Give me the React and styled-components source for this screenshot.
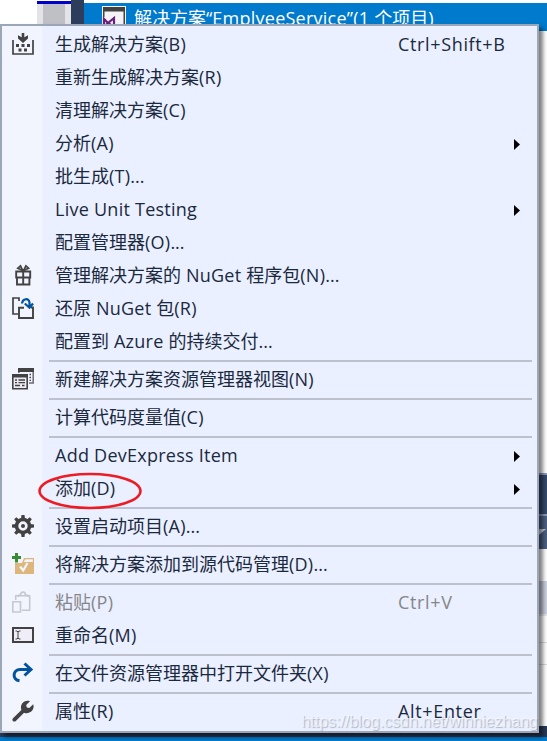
import React from "react";
import styled, { createGlobalStyle } from "styled-components";

const GlobalStyle = createGlobalStyle`
  * {
    box-sizing: border-box;
  }
  body {
    margin: 0;
    overflow: hidden;
    background-color: #fff;
    font-family: "Open Sans", "Noto Sans CJK SC", sans-serif;
    font-size: 18px;
  }
  svg {
    display: block;
  }
`;

const BuildIcon = () => (
  <svg width="22" height="22" viewBox="0 0 22 22">
    <path d="M1 7v14h20V7" fill="none" stroke="#424242" strokeWidth="1.7" />
    <path d="M9.7 0h2.6v4.2l3.700-2v3.200L11 10 6 5.400V2.200l3.700 2z" fill="#424242" />
    <path
      d="M4 11h3v3H4zM9.500 11h3v3h-3zM15 11h3v3h-3zM6.500 15.500h3v3h-3zM12 15.500h3v3h-3z"
      fill="#424242"
    />
  </svg>
);

const PackageIcon = () => (
  <svg width="22" height="22" viewBox="0 0 22 22" fill="none" stroke="#424242" strokeWidth="1.9">
    <path d="M4.200 7.500h14v6h-14zM5 13.500h12.400v7H5zM11.200 7v13.500" />
    <path d="M10.800 6.500L5.800 4.300 8.500 1.800zM11.600 6.500L16.600 4.300 13.900 1.800z" strokeWidth="1.700" />
  </svg>
);

const RestoreIcon = () => (
  <svg width="22" height="22" viewBox="0 0 22 22" fill="none" stroke="#424242">
    <path d="M6 17H1V1h6v3" strokeWidth="1.700" />
    <path d="M12 10.700H7V21h14V10.500h-2" strokeWidth="1.900" />
    <path d="M10 6.500C10.500 1.500 17 .5 17.500 5.500v4M12.800 6.500l4.700 4.200L21 6.500" stroke="#00539c" strokeWidth="2.200" />
  </svg>
);

const WindowsIcon = () => (
  <svg width="22" height="22" viewBox="0 0 22 22">
    <path d="M6.800 5V1h14.400v14H17" fill="none" stroke="#6b6b70" strokeWidth="1.500" />
    <path d="M6 0h16v4H6z" fill="#424242" />
    <path d="M.8 7h14.400v13.700H.8z" fill="#eceaf5" stroke="#424242" strokeWidth="1.600" />
    <path d="M0 6h16v3.500H0z" fill="#424242" />
    <path
      d="M3 12h2m1.500 0H13M3 14.700h2m1.500 0H13M3 17.500h5m2 0h2.500M17.500 6.500h1.500M17.500 9.500h1.500M17.500 12.300h1.500"
      stroke="#424242"
      strokeWidth="1.300"
    />
  </svg>
);

const GearIcon = () => (
  <svg width="22" height="22" viewBox="0 0 22 22">
    <circle cx="11" cy="11" r="6.500" fill="none" stroke="#424242" strokeWidth="3.600" />
    <circle cx="11" cy="11" r="2" fill="#424242" />
    {[0, 45, 90, 135, 180, 225, 270, 315].map((angle) => (
      <path key={angle} d="M9 4L9.500 0h3L13 4z" fill="#424242" transform={`rotate(${angle} 11 11)`} />
    ))}
  </svg>
);

const SourceControlIcon = () => (
  <svg width="22" height="22" viewBox="0 0 22 22">
    <path d="M3 10h7l2-5h10v16H3z" fill="#dcb67a" />
    <path d="M13.200 6.200h7.600V9h-9z" fill="#f2f3fc" />
    <path d="M8 13.500l3.200 4L15.500 10" fill="none" stroke="#f2f3fc" strokeWidth="2.300" />
    <path d="M3 0h3v3h3v3H6v3.500H3V6H0V3h3z" fill="#388a34" />
  </svg>
);

const PasteIcon = () => (
  <svg width="22" height="22" viewBox="0 0 22 22" fill="none" stroke="#c6c8d1" strokeWidth="1.600">
    <path d="M3.700 9V4.800h14v14.500H10M.8 10.800h7.700V21H.8z" />
    <path d="M6.500 6V4.300h2c0-4.400 5-4.400 5 0h2V6" />
  </svg>
);

const RenameIcon = () => (
  <svg width="22" height="22" viewBox="0 0 22 22">
    <path d="M1 4h20v14H1z" fill="#efedf7" stroke="#424242" strokeWidth="2" />
    <path d="M3.500 7h1.500l1 1 1-1h1.500M6 8v6M3.500 15h1.500l1-1 1 1h1.500" fill="none" stroke="#424242" />
  </svg>
);

const OpenFolderIcon = () => (
  <svg width="22" height="22" viewBox="0 0 22 22" fill="none" stroke="#00539c" strokeWidth="3">
    <path d="M7.500 18.800C-.5 17.500 1 7.500 8 7.500h11" />
    <path d="M12.500 1.500L19 7.500l-6.500 6" />
  </svg>
);

const WrenchIcon = () => (
  <svg width="22" height="22" viewBox="0 0 22 22">
    <path
      d="M1 18.300L9.400 10C7.500 4.700 12-.8 18 1.200L14.200 5l.6 2.500 2.500.6L21.200 4.300C23.200 10 17.500 14.800 12 12.700l-8.400 8.500C1.500 22.500-.7 20.300 1 18.300z"
      fill="#424242"
    />
  </svg>
);

const items = [
  { label: "生成解决方案(B)", keys: "Ctrl+Shift+B", icon: <BuildIcon /> },
  { label: "重新生成解决方案(R)" },
  { label: "清理解决方案(C)" },
  { label: "分析(A)", submenu: true },
  { label: "批生成(T)..." },
  { label: "Live Unit Testing", submenu: true },
  { label: "配置管理器(O)..." },
  { label: "管理解决方案的 NuGet 程序包(N)...", icon: <PackageIcon /> },
  { label: "还原 NuGet 包(R)", icon: <RestoreIcon /> },
  { label: "配置到 Azure 的持续交付..." },
  { separator: true },
  { label: "新建解决方案资源管理器视图(N)", icon: <WindowsIcon /> },
  { separator: true },
  { label: "计算代码度量值(C)" },
  { separator: true },
  { label: "Add DevExpress Item", submenu: true },
  { label: "添加(D)", submenu: true, circled: true },
  { separator: true },
  { label: "设置启动项目(A)...", icon: <GearIcon /> },
  { separator: true },
  { label: "将解决方案添加到源代码管理(D)...", icon: <SourceControlIcon /> },
  { separator: true },
  { label: "粘贴(P)", keys: "Ctrl+V", icon: <PasteIcon />, disabled: true },
  { label: "重命名(M)", icon: <RenameIcon /> },
  { separator: true },
  { label: "在文件资源管理器中打开文件夹(X)", icon: <OpenFolderIcon /> },
  { separator: true },
  { label: "属性(R)", keys: "Alt+Enter", icon: <WrenchIcon /> },
];

// Latin runs are set a little wider than the Chinese text around them
const MixedText = ({ children }) =>
  children
    .split(/([A-Za-z0-9() ]+)/)
    .map((part, index) => (index % 2 ? <Latin key={index}>{part}</Latin> : part));

function App() {
  return (
    <Page>
      <GlobalStyle />
      <TopBar>
        <Editor />
        <Splitter />
        <SolutionTitle>
          <SolutionIcon width="24" height="24" viewBox="0 0 24 24">
            <path d="M0 0h24v24H0z" fill="#f6f6f6" />
            <path d="M1 1h22v22H1z" fill="#424242" />
            <path d="M2.500 5.500h19V23h-19z" fill="#f4f2f5" />
            <path d="M1 11h13v12H1z" fill="#f4f2f5" />
            <path d="M2 18v-5l4 4 6-5v11M2 21l4-4 6 4" fill="none" stroke="#68217a" strokeWidth="2.200" />
          </SolutionIcon>
          <span>
            <MixedText>解决方案“EmplyeeService”(1 个项目)</MixedText>
          </span>
        </SolutionTitle>
      </TopBar>
      <Dock>
        <DockSpace />
        <DockTitle />
        <DockToolbar>
          <svg width="9" height="7" viewBox="0 0 9 7">
            <path d="M0 0h7L0 6z" fill="#ced4dd" />
          </svg>
        </DockToolbar>
        <DockBlank />
        <DockHeader />
        <DockRow $height={27} />
        <DockRow $height={22} />
      </Dock>
      <FooterEdge />
      <StatusBar />
      <Menu>
        {items.map((item, index) =>
          item.separator ? (
            <Separator key={index} />
          ) : (
            <Item key={index} $disabled={item.disabled}>
              <IconCell>{item.icon}</IconCell>
              <Label>
                <MixedText>{item.label}</MixedText>
                {item.circled && (
                  <Circle width="104" height="38" viewBox="0 0 104 38">
                    <ellipse cx="52" cy="19" rx="50.500" ry="17" />
                  </Circle>
                )}
              </Label>
              <Keys>{item.keys}</Keys>
              <ArrowCell>
                {item.submenu && (
                  <svg width="6" height="11" viewBox="0 0 6 11">
                    <path d="M0 0l6 5.500L0 11z" fill="#000" />
                  </svg>
                )}
              </ArrowCell>
            </Item>
          )
        )}
      </Menu>
      <Watermark>https://blog.csdn.net/winniezhang</Watermark>
    </Page>
  );
}

const Page = styled.div`
  position: relative;
  display: flex;
  flex-direction: column;
  width: 547px;
  height: 741px;
  overflow: hidden;
`;

const TopBar = styled.div`
  display: flex;
  height: 31px;
  padding-left: 37px;
`;

const Editor = styled.div`
  width: 34px;
  border-top: 1px solid #fff;
  background: linear-gradient(#0000c8 0 3px, transparent 3px),
    linear-gradient(to right, #e4e4e8 6px, #bfc0c5 6px 28px, #e4e4e8 28px);
`;

const Splitter = styled.div`
  width: 13px;
  background-color: #2d3d5c;
`;

const SolutionTitle = styled.div`
  display: flex;
  flex: 1;
  height: 28px;
  margin-top: 3px;
  padding-left: 18px;
  background-color: #007acc;
  color: #fff;
  line-height: 31px;
  white-space: nowrap;
`;

const SolutionIcon = styled.svg`
  margin: 3px 8px 0 0;
`;

const Latin = styled.span`
  letter-spacing: 0.25px;
`;

const Dock = styled.div`
  display: flex;
  flex-direction: column;
  width: 10px;
  height: 695px;
  margin-left: auto;
`;

const DockSpace = styled.div`
  height: 442px;
`;

const DockTitle = styled.div`
  height: 43px;
  border: solid #8e9bb9;
  border-width: 2px 0;
  background-color: #35496a;
`;

const DockToolbar = styled.div`
  height: 33px;
  padding: 13px 0 0 2px;
  background-color: #4d6082;
`;

const DockBlank = styled.div`
  height: 32px;
`;

const DockHeader = styled.div`
  height: 35px;
  border-bottom: 2px solid #e5e7ed;
  background-color: #ccd1e0;
`;

const DockRow = styled.div`
  height: ${({ $height }) => $height}px;
  border-bottom: 1px solid #dcdcdc;
`;

const FooterEdge = styled.div`
  height: 11px;
  background-color: #293955;
`;

const StatusBar = styled.div`
  flex: 1;
  background-color: #007acc;
`;

const Menu = styled.div`
  position: absolute;
  top: 24px;
  left: 0;
  width: 539px;
  height: 709px;
  padding: 2px 0 3px;
  border: 2px solid #9ba7b7;
  background: linear-gradient(to right, #f2f4fe 40px, #eaf0ff 40px);
  box-shadow: 4px 4px 4px rgba(0, 0, 0, 0.5);
`;

const Item = styled.div`
  display: flex;
  align-items: center;
  height: 33px;
  color: ${({ $disabled }) => ($disabled ? "#868688" : "#1b293e")};
  line-height: 33px;
  white-space: nowrap;
`;

const IconCell = styled.div`
  width: 53px;
  padding: 0 0 1px 10px;
`;

const Label = styled.div`
  position: relative;
  width: 343px;
`;

const Keys = styled.div`
  width: 114px;
  letter-spacing: 0.65px;
`;

const ArrowCell = styled.div`
  padding: 2px 0 0 2px;
`;

/* pen mark laid over the label */
const Circle = styled.svg`
  position: absolute;
  top: 0;
  left: -17px;
  fill: none;
  stroke: #ed1c24;
  stroke-width: 2.5px;
`;

const Separator = styled.div`
  height: 2px;
  margin: 2px 5px 1px 47px;
  background-color: #bdc1cd;
`;

const Watermark = styled.div`
  position: absolute;
  right: 9px;
  bottom: 8px;
  color: rgba(255, 255, 255, 0.6);
  font-family: "Liberation Sans", sans-serif;
  font-size: 16px;
  line-height: 22px;
  text-shadow: 1px 1px 1px rgba(100, 110, 130, 0.45);
`;

export default App;
